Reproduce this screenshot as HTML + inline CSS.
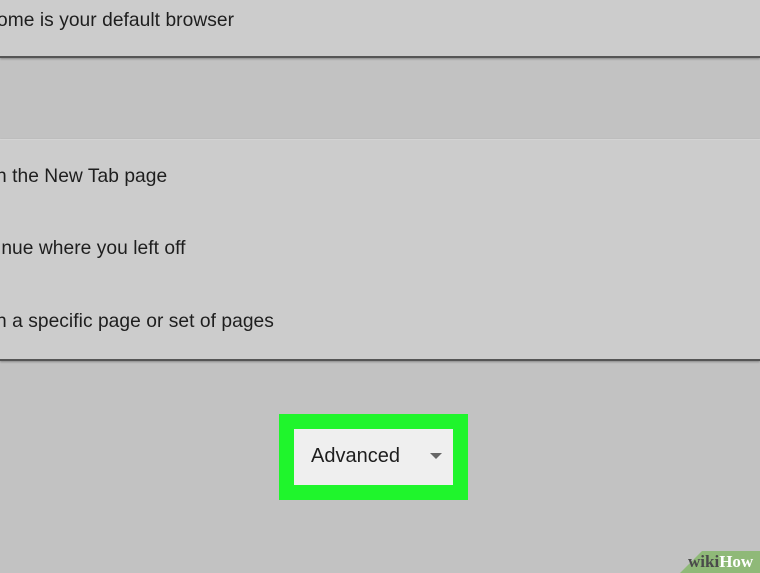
<!DOCTYPE html>
<html><head><style>
body{margin:0;width:760px;height:573px;overflow:hidden;background:#c2c2c2;font-family:"Liberation Sans",sans-serif;position:relative}
.card{position:absolute;left:0;width:760px;background:#cccccc;border-bottom:2px solid #555;box-shadow:0 1px 2px rgba(0,0,0,.3)}
.t{position:absolute;font-size:19.2px;letter-spacing:0.05px;color:#1e1e1e;white-space:nowrap}
</style></head><body>
<div class="card" style="top:0;height:56px"></div>
<div class="t" style="left:-3px;top:10px">ome is your default browser</div>
<div class="card" style="top:139px;height:219px;border-top:1px solid #d4d4d4"></div>
<div class="t" style="left:-4px;top:166px">n the New Tab page</div>
<div class="t" style="left:-3px;top:238px">inue where you left off</div>
<div class="t" style="left:-4px;top:311px">n a specific page or set of pages</div>
<div style="position:absolute;left:279px;top:414px;width:189px;height:86px;background:#1ff52c"></div>
<div style="position:absolute;left:294px;top:429px;width:159px;height:56px;background:#efefef"></div>
<div class="t" style="left:311px;top:445px;font-size:20px;letter-spacing:0">Advanced</div>
<div style="position:absolute;left:430px;top:453px;width:0;height:0;border-left:6px solid transparent;border-right:6px solid transparent;border-top:6px solid #666"></div>
<div style="position:absolute;left:680px;top:551px;width:110px;height:22px;background:#8fb978;transform:skewX(-45deg);transform-origin:bottom left"></div>
<div style="position:absolute;left:688px;top:552px;font-family:'Liberation Serif',serif;font-weight:bold;font-size:17px;color:#4a4a4a">wiki<span style="color:#fff">How</span></div>
</body></html>
